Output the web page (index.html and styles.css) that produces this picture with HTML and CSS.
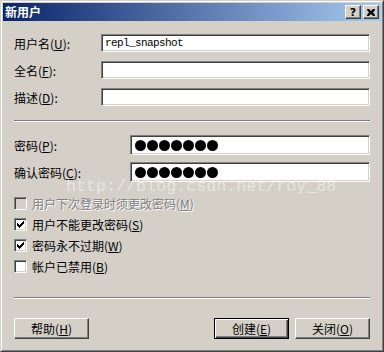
FILE: index.html
```html
<!DOCTYPE html>
<html lang="zh-CN">
<head>
  <meta charset="UTF-8" />
  <title>新用户</title>
  <link rel="stylesheet" href="styles.css">
</head>
<body>
  <div class="window">
    <div class="frame">
      <div class="titlebar">
        <span class="title">新用户</span>
        <span class="title-btn help">?</span>
        <span class="title-btn close">
          <svg width="8" height="7" viewBox="0 0 8 7"><path d="M0 0h2l2 2 2-2h2v1L6 3.5 8 6v1H6L4 5 2 7H0V6l2-2.5L0 1z" fill="#000"/></svg>
        </span>
      </div>

      <div class="content">
        <div class="fields">
          <label>用户名(<u>U</u>):</label>
          <div class="box"><span class="val">repl_snapshot</span></div>
          <label>全名(<u>F</u>):</label>
          <div class="box"></div>
          <label>描述(<u>D</u>):</label>
          <div class="box"></div>
        </div>

        <div class="sep sep-top"></div>

        <div class="fields pw">
          <label>密码(<u>P</u>):</label>
          <div class="box"><span class="dots"><i></i><i></i><i></i><i></i><i></i><i></i><i></i></span></div>
          <label>确认密码(<u>C</u>):</label>
          <div class="box"><span class="dots"><i></i><i></i><i></i><i></i><i></i><i></i><i></i></span></div>
        </div>

        <div class="checks">
          <div class="check disabled"><span class="cb"></span><span>用户下次登录时须更改密码(<u>M</u>)</span></div>
          <div class="check"><span class="cb"><svg width="7" height="7" viewBox="0 0 7 7"><path d="M0 2h1v1h1v1h1V3h1V2h1V1h1V0h1v3H6v1H5v1H4v1H3v1H2V6H1V5H0z" fill="#000"/></svg></span><span>用户不能更改密码(<u>S</u>)</span></div>
          <div class="check"><span class="cb"><svg width="7" height="7" viewBox="0 0 7 7"><path d="M0 2h1v1h1v1h1V3h1V2h1V1h1V0h1v3H6v1H5v1H4v1H3v1H2V6H1V5H0z" fill="#000"/></svg></span><span>密码永不过期(<u>W</u>)</span></div>
          <div class="check"><span class="cb"></span><span>帐户已禁用(<u>B</u>)</span></div>
        </div>

        <div class="sep sep-bottom"></div>

        <div class="buttons">
          <span class="btn">帮助(<u>H</u>)</span>
          <span class="spacer"></span>
          <span class="btn default">创建(<u>E</u>)</span>
          <span class="btn">关闭(<u>O</u>)</span>
        </div>
      </div>

      <div class="watermark">http://blog.csdn.net/roy_88</div>
    </div>
  </div>
</body>
</html>
```

FILE: styles.css
```css
* {
  box-sizing: border-box;
}

body {
  margin: 0;
  background: #d4d0c8;
  font-family: "Noto Sans CJK SC", "Noto Sans", sans-serif;
  font-size: 12px;
  color: #000;
}

.window {
  width: 384px;
  height: 352px;
  border: 1px solid;
  border-color: #d4d0c8 #404040 #404040 #d4d0c8;
}

.frame {
  position: relative;
  height: 100%;
  border: 1px solid;
  border-color: #fff #808080 #808080 #fff;
  padding: 1px;
}

.titlebar {
  height: 18px;
  background: linear-gradient(to right, #0a246a, #a6caf0);
  display: flex;
  align-items: center;
  gap: 2px;
  padding: 0 2px 0 2px;
}

.title {
  flex: 1;
  color: #fff;
  font-weight: bold;
  line-height: 18px;
}

.title-btn {
  width: 16px;
  height: 14px;
  background: #d4d0c8;
  border: 1px solid;
  border-color: #fff #404040 #404040 #fff;
  box-shadow: inset -1px -1px #808080;
  display: flex;
  align-items: center;
  justify-content: center;
  font-family: "DejaVu Sans", sans-serif;
  font-weight: bold;
  font-size: 11px;
  line-height: 1;
}

.content {
  padding: 13px 11px 0 11px;
}

.fields {
  display: grid;
  grid-template-columns: 87px 1fr;
  grid-auto-rows: 18px;
  row-gap: 9px;
  align-items: center;
}

.fields.pw {
  grid-template-columns: 116px 1fr;
  grid-auto-rows: 20px;
  row-gap: 7px;
  margin-top: 13px;
}

label {
  white-space: nowrap;
}

.box {
  height: 100%;
  background: #fff;
  border: 1px solid;
  border-color: #808080 #fff #fff #808080;
  box-shadow: inset 1px 1px #404040, inset -1px -1px #d4d0c8;
  display: flex;
  align-items: center;
  padding-left: 3px;
}

.val {
  font-family: "Liberation Mono", monospace;
  font-size: 11px;
  letter-spacing: -0.6px;
}

.dots {
  display: flex;
  gap: 1px;
  padding-left: 1px;
}

.dots i {
  width: 11px;
  height: 11px;
  border-radius: 50%;
  background: #000;
}

.sep {
  height: 2px;
  border-top: 1px solid #808080;
  border-bottom: 1px solid #fff;
}

.sep-top {
  margin-top: 14px;
}

.sep-bottom {
  margin-top: 24px;
}

.checks {
  margin-top: 15px;
  display: flex;
  flex-direction: column;
  gap: 8px;
}

.check {
  height: 13px;
  display: flex;
  align-items: center;
  gap: 5px;
  white-space: nowrap;
}

.cb {
  width: 13px;
  height: 13px;
  background: #fff;
  border: 1px solid;
  border-color: #808080 #fff #fff #808080;
  box-shadow: inset 1px 1px #404040, inset -1px -1px #d4d0c8;
  display: flex;
  align-items: center;
  justify-content: center;
}

.check.disabled {
  color: #808080;
  text-shadow: 1px 1px #fff;
}

.check.disabled .cb {
  background: #d4d0c8;
}

.buttons {
  margin-top: 19px;
  display: flex;
  gap: 6px;
}

.spacer {
  flex: 1;
}

.btn {
  width: 75px;
  height: 21px;
  border: 1px solid;
  border-color: #fff #404040 #404040 #fff;
  box-shadow: inset -1px -1px #808080;
  display: flex;
  align-items: center;
  justify-content: center;
}

.btn.default {
  border-color: #000;
  box-shadow: inset 1px 1px #fff, inset -1px -1px #404040, inset -2px -2px #808080;
}

.watermark {
  position: absolute;
  left: 64px;
  top: 177px;
  font-family: "Liberation Mono", monospace;
  font-size: 16.7px;
  line-height: 1;
  color: rgba(255, 255, 255, 0.45);
  white-space: nowrap;
  pointer-events: none;
}
```
